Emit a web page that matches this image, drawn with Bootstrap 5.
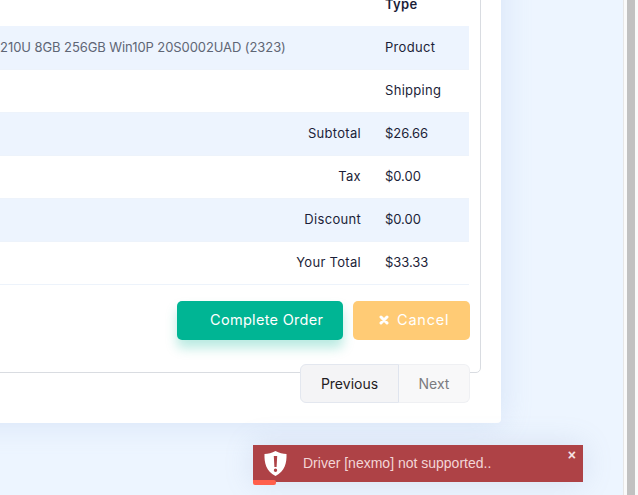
<!DOCTYPE html>
<html lang="en">

<head>
  <meta charset="UTF-8">
  <meta name="viewport" content="width=device-width, initial-scale=1.0">
  <title>Order Summary</title>
  <link href="https://cdn.jsdelivr.net/npm/bootstrap@5.3.0/dist/css/bootstrap.min.css" rel="stylesheet">
  <style>
    html, body { height: 495px; overflow: hidden; }
    body { font-family: Inter, "Open Sans", sans-serif; font-size: 13px; background: #edf5ff; color: #1b1e38; }
    .page-area { width: 623px; height: 495px; overflow: hidden; }
    .scroll-strip { width: 15px; height: 495px; background: #fafafa; border-left: 1px solid #e6e6e6; padding: 0 3px; }
    .scroll-thumb { width: 8px; height: 100%; background: #c1c1c1; }
    .order-panel { width: 761px; margin: -48px 0 0 -260px; padding: 20px; background: #fff; border-radius: 4px; box-shadow: 0 0 30px rgba(160, 185, 225, .3); }
    .order-box { height: 401px; padding: 10px 10px 33px; border: 1px solid #d9dce1; border-radius: 5px; }
    .order-table { width: 698px; margin: 0 0 16px; letter-spacing: .3px; table-layout: fixed; }
    .order-table th, .order-table td { height: 43px; padding: 0 12px; vertical-align: middle; border-bottom: 1px solid #edf3fb; white-space: nowrap; background: transparent; color: #1b1e38; font-weight: 400; box-shadow: none; }
    .order-table th { font-weight: 600; border-bottom: 0; }
    .order-table .col-name { width: 525px; }
    .order-table .col-label { width: 77px; }
    .order-table .col-value { width: 96px; }
    .order-table td.col-label { padding-left: 0; }
    .order-table td.money-val { letter-spacing: -.05px; }
    .order-table tr.strip td { background: #edf4fe; }
    .order-table td.prod-name { padding-left: 66px; letter-spacing: -.08px; color: #5f6675; }
    .btn-done, .btn-stop { height: 39px; font-size: 14.5px; color: #fff; border: 0; border-radius: 5px; }
    .btn-done { width: 166px; margin-right: 2px; padding-left: 33px; text-align: left; letter-spacing: .3px; background: #00b594; box-shadow: 0 8px 12px rgba(0, 181, 148, .28); }
    .btn-stop { width: 117px; padding-left: 26px; text-align: left; letter-spacing: .8px; background: #ffcb75; }
    .btn-done:hover { background: #00b594; color: #fff; }
    .btn-stop:hover { background: #ffcb75; color: #fff; }
    .pager-wrap { margin: -9px 11px 0 0; }
    .pager-wrap .page-link { width: 99px; height: 39px; padding: 8px 0; text-align: center; font-size: 14px; color: #1f2023; background: #f4f4f6; border-color: #e3e7ef; }
    .pager-wrap .page-item.disabled .page-link { width: 72px; color: #7b7b80; background: #f8f8f9; border-color: #eff0f3 #eff0f3 #eff0f3 #dfe4ee; }
    .toast-box { position: absolute; left: 253px; top: 445px; width: 330px; height: 37px; background: #ae4246; box-shadow: 0 0 30px rgba(120, 140, 180, .2); color: #f3d6d7; font-family: "Liberation Sans", sans-serif; font-size: 14px; }
    .toast-icon { margin: 0 16px 0 11px; }
    .toast-close { position: absolute; right: 7px; top: 2px; color: #f6e3e3; font-size: 14px; font-weight: 700; line-height: 16px; }
    .toast-bar { position: absolute; left: 0; bottom: -3px; width: 23px; height: 5px; background: #ff5f4c; border-radius: 0 2px 2px 2px; }
  </style>
</head>

<body>

  <div class="d-flex">
    <div class="page-area">
      <div class="order-panel">
        <div class="order-box d-flex flex-column">
          <table class="table order-table">
            <thead>
              <tr>
                <th class="col-name"></th>
                <th class="col-label"></th>
                <th class="col-value">Type</th>
              </tr>
            </thead>
            <tbody>
              <tr class="strip">
                <td class="prod-name">Lenovo ThinkPad E15 i5-10210U 8GB 256GB Win10P 20S0002UAD (2323)</td>
                <td class="col-label"></td>
                <td class="col-value">Product</td>
              </tr>
              <tr>
                <td></td>
                <td class="col-label"></td>
                <td class="col-value">Shipping</td>
              </tr>
              <tr class="strip">
                <td></td>
                <td class="col-label text-end">Subtotal</td>
                <td class="col-value money-val">$26.66</td>
              </tr>
              <tr>
                <td></td>
                <td class="col-label text-end">Tax</td>
                <td class="col-value money-val">$0.00</td>
              </tr>
              <tr class="strip">
                <td></td>
                <td class="col-label text-end">Discount</td>
                <td class="col-value money-val">$0.00</td>
              </tr>
              <tr>
                <td></td>
                <td class="col-label text-end">Your Total</td>
                <td class="col-value money-val">$33.33</td>
              </tr>
            </tbody>
          </table>
          <div class="d-flex justify-content-end gap-2">
            <button type="button" class="btn btn-done">Complete Order</button>
            <button type="button" class="btn btn-stop d-flex align-items-center">
              <svg width="10" height="10" viewBox="0 0 10 10" class="me-2"><path d="M2 2l6 6M8 2l-6 6" stroke="#fff" stroke-width="3" stroke-linecap="round" /></svg>Cancel
            </button>
          </div>
        </div>
        <nav class="pager-wrap d-flex justify-content-end">
          <ul class="pagination mb-0">
            <li class="page-item"><a class="page-link" href="#">Previous</a></li>
            <li class="page-item disabled"><a class="page-link" href="#">Next</a></li>
          </ul>
        </nav>
      </div>
    </div>
    <div class="scroll-strip">
      <div class="scroll-thumb"></div>
    </div>
  </div>

  <div class="toast-box d-flex align-items-center">
    <svg width="23" height="25" viewBox="0 0 23 25" class="toast-icon">
      <path fill="#fff" fill-rule="evenodd" d="M11.5 0C8 2 4 3 .5 3c-.3 9 1.500 17 11 22 9.500-5 11.300-13 11-22C19 3 15 2 11.500 0zM9.800 5h3.400l-.6 11h-2.200zM11.500 17.500a1.700 1.700 0 1 1 0 3.400 1.700 1.700 0 0 1 0-3.400z" />
    </svg>
    <span>Driver [nexmo] not supported..</span>
    <span class="toast-close">×</span>
    <span class="toast-bar"></span>
  </div>

  <script src="https://cdn.jsdelivr.net/npm/bootstrap@5.3.0/dist/js/bootstrap.bundle.min.js"></script>
</body>

</html>
